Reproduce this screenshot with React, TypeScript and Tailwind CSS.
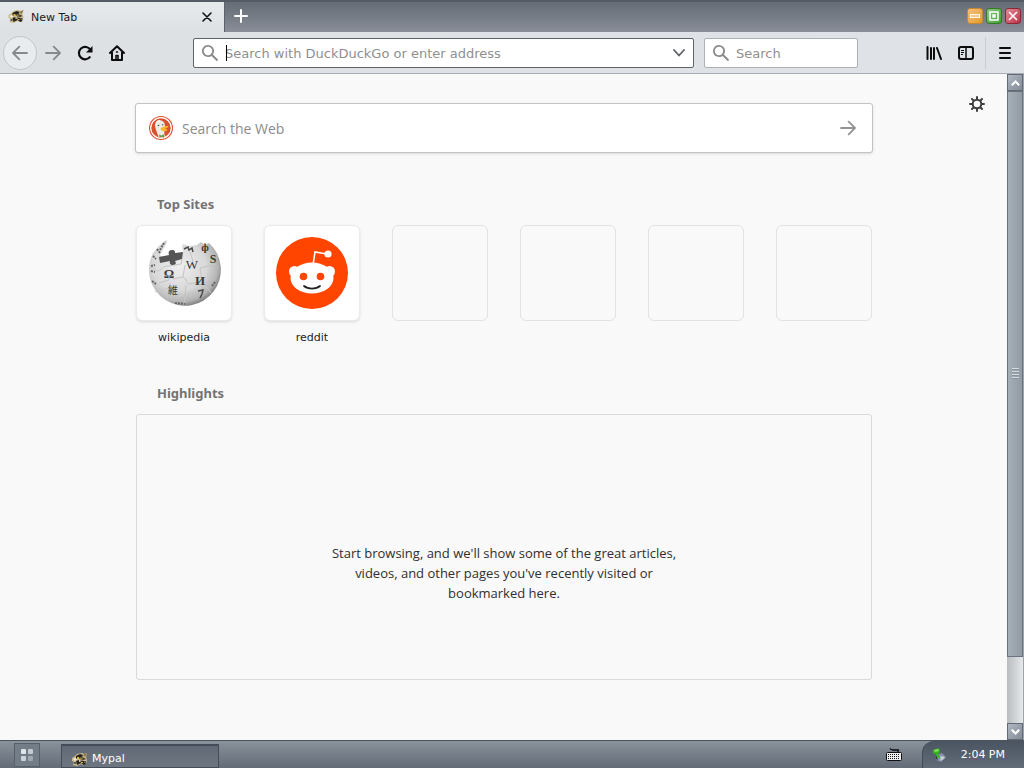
import type { ReactNode } from "react";

const emptySites = [1, 2, 3, 4];
const gripLines = [1, 2, 3, 4];
const startSquares = ["bg-[#dfe4e8]", "bg-[#c3cad0]", "bg-[#ccd3d8]", "bg-[#9fa8b0]"];

function SearchIcon({ className }: { className?: string }) {
    return (
        <svg viewBox="0 0 16 16" className={className} fill="currentColor" aria-hidden="true">
            <path d="M15.7 14.3l-4.8-4.8a6 6 0 1 0-1.4 1.4l4.8 4.8a1 1 0 0 0 1.4-1.4zM6 10.2a4.2 4.2 0 1 1 4.2-4.2A4.2 4.2 0 0 1 6 10.200z" />
        </svg>
    );
}

function ArrowIcon({ className }: { className?: string }) {
    return (
        <svg viewBox="0 0 16 16" className={className} fill="none" stroke="currentColor" strokeWidth="1.800" strokeLinecap="round" strokeLinejoin="round" aria-hidden="true">
            <path d="M1 8h14M8.700 1.700L15 8l-6.300 6.300" />
        </svg>
    );
}

function BadgerIcon({ className }: { className?: string }) {
    return (
        <svg viewBox="0 0 16 16" className={className} aria-hidden="true">
            <path d="M0 6l3-2 2-2 5-1 2 1 3-1-1 4 1 3-1 4-3 1-2-1-4 2-4-1 1-3-2-1z" fill="#c9b98c" />
            <path d="M4 4l4-2 3 1-1 2 4 2-3 1-4-2-3 1zM4 9l3-1 5 1 2 3-2 1-3-2-4 2z" fill="#25231d" />
            <path d="M7 6l2-1 3 2-3 1zM11 3l4-2-2 4z" fill="#8a7440" />
            <path d="M5 5h2v2H5zM9 10h2v1H9z" fill="#e0b83e" />
            <path d="M1 7l2-1 2 1-2 2zM7 8l3 1-3 1z" fill="#f4edd8" />
            <path d="M12 9h2v2h-2zM2 10h2v2H2z" fill="#5a5d50" />
        </svg>
    );
}

function DuckIcon() {
    return (
        <svg viewBox="0 0 24 24" className="h-6 w-6 shrink-0" aria-hidden="true">
            <circle cx="12" cy="12" r="12" fill="#d9502f" />
            <circle cx="12" cy="12" r="10.300" fill="none" stroke="#fff" strokeWidth="1.200" />
            <path d="M9.500 21C8.500 17 5.800 12 6 8.500 6.500 5.500 8.500 3.800 11 4.300c3 .3 5 2.200 5 5.700 0 4-1.500 6 0 10.500-2 1.200-4.500 1.300-6.500.5z" fill="#f0ebe2" />
            <path d="M7 6.500c1-2 3-2.500 4.500-2L10 6z" fill="#fff" />
            <path d="M12 12c2-1.300 5.500-2.300 7.300-1.800.9.800-1.700 2-3.500 2.500 1.500.6 3.200.6 2.700 1.400-.8 1.500-6.300 1.400-6.800-.6-.1-.5-.2-1.100.3-1.500z" fill="#fbb52d" />
            <path d="M10 18.500l2.500 1 2.500-1.300v3.300l-2.500-.7-2 .8z" fill="#5f9c4a" />
            <circle cx="9.500" cy="9.500" r=".8" fill="#35536b" />
            <circle cx="13.700" cy="8.800" r=".7" fill="#35536b" />
        </svg>
    );
}

function WikipediaIcon() {
    return (
        <svg viewBox="0 -2 74 74" className="h-[74px] w-[74px]" aria-hidden="true">
            <defs>
                <radialGradient id="globe" cx="42%" cy="40%" r="62%">
                    <stop offset="0" stopColor="#eeeeee" />
                    <stop offset=".6" stopColor="#d8d8d8" />
                    <stop offset=".87" stopColor="#b4b4b4" />
                    <stop offset="1" stopColor="#7d7d7d" />
                </radialGradient>
            </defs>
            <path d="M6 15L12 8l7-6 1 2-3 6-4 7 4 3 13-2 6-4-1-5 1-3 6 2 8-1 4-3 4 3 4-2A36 36 0 1 1 6 15z" fill="url(#globe)" />
            <path d="M12 19l10-2c-1-3 0-5 3-5s3 1 3 3l8-1-1 7-7 2c2 3 0 4-2 4s-4-1-3-4l-10 2z" fill="#555" />
            <path d="M3 30c6-2 5 5 10 2s3-4 9-4l12-2 2-8M12 45l10-3c-1-5 4-5 4-1l10-2 2-12M36 39c5 2 2 7 7 7l12-3-2-13M20 60l3-15M39 47l-2 20M55 43l9 12M43 14l3 9M53 30l16-4M8 54l14-4M37 57l16-4" fill="none" stroke="#c4c4c4" strokeWidth="1" />
            <g fill="#3a3a3a" fontFamily="Liberation Serif, Noto Sans CJK JP, serif" fontSize="13" textAnchor="middle">
                <text x="22" y="40" fontWeight="bold">Ω</text>
                <text x="45" y="31">W</text>
                <text x="53" y="47" fontWeight="bold">И</text>
                <text x="26" y="56" fontSize="10">維</text>
                <text x="66" y="25" fontSize="12" fontWeight="bold">S</text>
                <text x="58" y="13" fontSize="11" fontWeight="bold">ф</text>
            </g>
            <path d="M51 53l5-1-1 4-2 4M37 11l4-2 1 3 3-2 1 4" fill="none" stroke="#4a4a4a" strokeWidth="1.500" />
            <path d="M17 5l-4 7M10 11l3 4M6 18l3 3M4 28l4-1M4 33l4 1M5 43l4 3M28 65l10 1M65 48l3-4" stroke="#666" strokeWidth="2" strokeDasharray="2 1" />
        </svg>
    );
}

function RedditIcon() {
    return (
        <svg viewBox="0 0 72 72" className="h-[72px] w-[72px]" aria-hidden="true">
            <circle cx="36" cy="36" r="36" fill="#ff4500" />
            <path d="M37 28l2-13 12 2" fill="none" stroke="#fff" strokeWidth="1.600" />
            <circle cx="52" cy="17" r="3.600" fill="#fff" />
            <circle cx="18.500" cy="34.500" r="5.500" fill="#fff" />
            <circle cx="53.500" cy="34.500" r="5.500" fill="#fff" />
            <ellipse cx="36" cy="41" rx="21.500" ry="15.500" fill="#fff" />
            <circle cx="27.500" cy="39.500" r="3.800" fill="#ff4500" />
            <circle cx="44.500" cy="39.500" r="3.800" fill="#ff4500" />
            <path d="M28 49c4 3.400 12 3.400 16 0" fill="none" stroke="#222" strokeWidth="1.800" strokeLinecap="round" />
        </svg>
    );
}

function ToolButton({ label, children, className = "w-8" }: { label: string; children: ReactNode; className?: string }) {
    return (
        <button type="button" aria-label={label} className={`flex h-8 shrink-0 items-center justify-center ${className}`}>
            {children}
        </button>
    );
}

function TitleBar() {
    return (
        <header className="flex h-8 shrink-0 items-stretch border-t-2 border-[#535b65] bg-linear-to-b from-[#656c76] to-[#898e98] text-[11px]">
            <div className="flex w-56 items-center bg-linear-to-b from-[#e6eaec] to-[#dde1e4] pl-2">
                <BadgerIcon className="h-4 w-[17px]" />
                <span className="ml-1.5 flex-1 pt-0.5">New Tab</span>
                <button type="button" aria-label="Close tab" className="mr-[9px] flex h-4 w-4 items-center justify-center">
                    <svg viewBox="0 0 10 10" className="h-2.5 w-2.5" stroke="#111" strokeWidth="1.600" strokeLinecap="round">
                        <path d="M1 1l8 8M9 1L1 9" />
                    </svg>
                </button>
            </div>
            <button type="button" aria-label="New tab" className="flex w-8 items-center justify-center border-l border-[#5c636e] pb-0.5">
                <svg viewBox="0 0 14 14" className="h-3.5 w-3.5" stroke="#fff" strokeWidth="2" strokeLinecap="round">
                    <path d="M7 1v12M1 7h12" />
                </svg>
            </button>
            <div className="ml-auto flex items-center gap-[3px] pr-[3px] pb-0.5">
                <button type="button" aria-label="Minimize" className="flex h-4 w-4 items-center justify-center rounded-[3px] border border-[#c9882c] bg-linear-to-br from-[#f7c07c] to-[#e39a1c]">
                    <span className="h-1 w-2.5 border border-[#fff8e6] bg-[#f4c98a]" />
                </button>
                <button type="button" aria-label="Maximize" className="flex h-4 w-4 items-center justify-center rounded-[3px] border border-[#357a22] bg-linear-to-br from-[#8fc586] to-[#39a32a]">
                    <svg viewBox="0 0 10 10" className="h-2.5 w-2.5" fill="none" stroke="#fff" strokeWidth="1.500">
                        <path d="M1 1h8v8H1zM4 4h2v2H4z" />
                    </svg>
                </button>
                <button type="button" aria-label="Close" className="flex h-4 w-4 items-center justify-center rounded-[3px] border border-[#8f2636] bg-linear-to-br from-[#e08a98] to-[#c02c48]">
                    <svg viewBox="0 0 10 10" className="h-2.5 w-2.5" stroke="#fff" strokeWidth="1.600">
                        <path d="M1 1l8 8M9 1L1 9" />
                    </svg>
                </button>
            </div>
        </header>
    );
}

function Toolbar() {
    return (
        <nav className="flex h-[42px] shrink-0 items-center border-b border-[#a7adb2] bg-linear-to-r from-[#dde1e4] to-[#dfe3e8] text-[#0c0c0d]">
            <button type="button" aria-label="Back" className="ml-[3px] flex h-[34px] w-[34px] shrink-0 items-center justify-center rounded-full border border-[#c3c7ca] bg-[#e9ecee] text-[#85898d]">
                <ArrowIcon className="h-4 w-4 rotate-180" />
            </button>
            <ToolButton label="Forward">
                <ArrowIcon className="h-4 w-4 text-[#85898d]" />
            </ToolButton>
            <ToolButton label="Reload">
                <svg viewBox="0 0 16 16" className="h-4 w-4" fill="none" stroke="currentColor" strokeWidth="2.200">
                    <path d="M13.300 11.500A6.200 6.200 0 1 1 13.500 5" />
                    <path d="M15.500 1v6.500H9z" fill="currentColor" stroke="none" />
                </svg>
            </ToolButton>
            <ToolButton label="Home">
                <svg viewBox="0 0 16 16" className="h-4 w-4" fill="none" stroke="currentColor" strokeWidth="2" strokeLinecap="round" strokeLinejoin="round">
                    <path d="M1 8l7-6.800L15 8M3 7.500V15h10V7.500" />
                    <path d="M7 14.500v-4h2v4M7.500 7h1" strokeWidth="1.600" />
                </svg>
            </ToolButton>
            <label className="relative ml-[60px] flex h-[30px] min-w-0 flex-1 items-center rounded-xs border border-[#5e6368] bg-white pl-2">
                <SearchIcon className="h-4 w-4 shrink-0 text-[#8b8b8b]" />
                <input type="text" aria-label="Address" placeholder="Search with DuckDuckGo or enter address" className="ml-[7px] min-w-0 flex-1 bg-transparent pt-0.5 text-[13px] outline-none placeholder:text-[#8f8f8f]" />
                <span className="absolute top-1.5 left-8 h-4 w-px bg-black" />
                <button type="button" aria-label="Show history" className="mr-2 flex h-4 w-3 items-center justify-center">
                    <svg viewBox="0 0 12 8" className="h-2 w-3" fill="none" stroke="#5c6064" strokeWidth="1.800" strokeLinecap="round" strokeLinejoin="round">
                        <path d="M1 1l5 5.500L11 1" />
                    </svg>
                </button>
            </label>
            <label className="mr-[60px] ml-2.5 flex h-[30px] w-[154px] shrink-0 items-center rounded-xs border border-[#abb0b5] bg-white pl-2">
                <SearchIcon className="h-4 w-4 shrink-0 text-[#8b8b8b]" />
                <input type="search" aria-label="Search" placeholder="Search" className="ml-[7px] min-w-0 flex-1 bg-transparent pt-0.5 text-[13px] outline-none placeholder:text-[#8f8f8f]" />
            </label>
            <ToolButton label="Library">
                <svg viewBox="0 0 16 16" className="h-4 w-4" stroke="currentColor" strokeWidth="2" strokeLinecap="round">
                    <path d="M1.500 2v12M5 3v11M8 3v11M11 3l4 11" />
                </svg>
            </ToolButton>
            <ToolButton label="Sidebars">
                <svg viewBox="0 0 16 16" className="h-4 w-4" fill="none" stroke="currentColor" strokeWidth="2">
                    <rect x="1" y="2" width="14" height="12" rx="2" />
                    <path d="M8 2v12" strokeWidth="1.500" />
                    <path d="M3 5.500h3M3 7.500h3M3 9.500h2" strokeWidth="1" />
                </svg>
            </ToolButton>
            <span className="ml-[3px] h-8 w-px bg-[#c8cdd1]" />
            <ToolButton label="Menu" className="w-[38px]">
                <svg viewBox="0 0 14 14" className="h-3.5 w-3.5" stroke="currentColor" strokeWidth="2" strokeLinecap="round">
                    <path d="M2 2h10M2 7h10M2 12h10" />
                </svg>
            </ToolButton>
        </nav>
    );
}

function Scrollbar() {
    const arrow = "flex h-[17px] shrink-0 items-center justify-center border border-[#626a76] bg-linear-to-br from-[#b0b8c2] to-[#838b97]";
    return (
        <div className="flex w-[17px] shrink-0 flex-col border-r border-[#9ba3ab] bg-linear-to-r from-[#b9bdc1] to-[#e6e8ea]">
            <button type="button" aria-label="Scroll up" className={arrow}>
                <svg viewBox="0 0 9 6" className="h-1.5 w-[9px]" fill="none" stroke="#fff" strokeWidth="2">
                    <path d="M.8 5.200l3.700-3.700 3.700 3.700" />
                </svg>
            </button>
            <div className="flex flex-[17] flex-col items-center justify-center gap-px border border-[#69727d] bg-linear-to-r from-[#a5afb6] to-[#929ba5]">
                {gripLines.map((n) => (
                    <span key={n} className="h-0.5 w-[7px] border-t border-[#d5dade] bg-[#8a949d]" />
                ))}
            </div>
            <div className="flex-[2]" />
            <button type="button" aria-label="Scroll down" className={arrow}>
                <svg viewBox="0 0 9 6" className="h-1.5 w-[9px]" fill="none" stroke="#fff" strokeWidth="2">
                    <path d="M.8 .8l3.700 3.700L8.200 .8" />
                </svg>
            </button>
        </div>
    );
}

function NewTabPage() {
    return (
        <main className="relative flex-1 overflow-hidden bg-[#f9f9f9] pt-[29px] pr-8 pl-[33px]">
            <button type="button" aria-label="Settings" className="absolute top-[22px] right-[22px] text-[#3f3f41]">
                <svg viewBox="0 0 16 16" className="h-4 w-4" fill="none" stroke="currentColor" strokeWidth="2" strokeLinecap="round">
                    <circle cx="8" cy="8" r="4.300" />
                    <path d="M8 1v2M8 13v2M1 8h2M13 8h2M3 3l1.500 1.500M11.500 11.500L13 13M13 3l-1.500 1.500M4.500 11.500L3 13" />
                </svg>
            </button>
            <div className="mx-auto max-w-[736px]">
                <form className="-mx-px flex h-[50px] items-center rounded-[3px] border border-[#c3c3c4] bg-white px-[13px] shadow-sm">
                    <DuckIcon />
                    <input type="text" aria-label="Search the Web" placeholder="Search the Web" className="ml-[9px] min-w-0 flex-1 bg-transparent font-['Open_Sans',sans-serif] text-[14px] outline-none placeholder:text-[#8c8c8e]" />
                    <button type="button" aria-label="Submit" className="mr-[3px] text-[#949496]">
                        <ArrowIcon className="h-4 w-4" />
                    </button>
                </form>

                <section className="mt-[41px]">
                    <h2 className="pl-[21px] font-['Noto_Sans',sans-serif] text-[13px] leading-5 font-bold text-[#737375]">Top Sites</h2>
                    <ul className="mt-[11px] grid grid-cols-6 gap-8 text-center text-[11px] leading-4 text-[#1c1c1d]">
                        <li>
                            <a href="#wikipedia">
                                <span className="flex h-24 items-center justify-center rounded-md border border-[#ececed] bg-white shadow-sm">
                                    <WikipediaIcon />
                                </span>
                                <span className="mt-[9px] block">wikipedia</span>
                            </a>
                        </li>
                        <li>
                            <a href="#reddit">
                                <span className="flex h-24 items-center justify-center rounded-md border border-[#ececed] bg-white shadow-sm">
                                    <RedditIcon />
                                </span>
                                <span className="mt-[9px] block">reddit</span>
                            </a>
                        </li>
                        {emptySites.map((n) => (
                            <li key={n} className="h-24 rounded-md border border-[#e2e2e3]" />
                        ))}
                    </ul>
                </section>

                <section className="mt-[37px] text-[13px] leading-5">
                    <h2 className="pl-[21px] font-['Noto_Sans',sans-serif] font-bold text-[#737375]">Highlights</h2>
                    <div className="mt-[11px] rounded-[3px] border border-[#d9d9da] pt-32 pb-[76px]">
                        <p className="mx-auto max-w-[360px] text-center font-['Open_Sans',sans-serif] text-[#2f2f30]">
                            Start browsing, and we'll show some of the great articles, videos, and other pages you've recently visited or bookmarked here.
                        </p>
                    </div>
                </section>
            </div>
        </main>
    );
}

function Taskbar() {
    return (
        <footer className="flex h-7 shrink-0 items-stretch border-t border-[#4c555f] bg-linear-to-b from-[#8a939b] to-[#626b77] text-[11px] text-white">
            <button type="button" aria-label="Start" className="mt-0.5 ml-3.5 grid h-6 w-[26px] grid-cols-2 place-content-center gap-0.5 border border-[#56606a] bg-[#737d88] px-1.5">
                {startSquares.map((color) => (
                    <span key={color} className={`h-[5px] rounded-[1px] ${color}`} />
                ))}
            </button>
            <button type="button" className="mt-[3px] ml-[21px] flex w-[158px] items-center gap-1 border border-t-2 border-[#434d58] bg-linear-to-b from-[#606975] to-[#6d7681] pt-1.5 pl-2.5">
                <BadgerIcon className="h-4 w-4" />
                Mypal
            </button>
            <div className="mr-5 ml-auto flex items-center">
                <svg viewBox="0 0 16 13" className="h-[13px] w-4" aria-hidden="true">
                    <path d="M4 0l1 2 1-1 1 2 1-2 1 2 1-2 1 2 1-2 1 2-2 1" fill="none" stroke="#111" />
                    <rect x=".5" y="4.500" width="15" height="8" rx="1" fill="#eee" stroke="#111" />
                    <path d="M2 6.500h12M2 8.500h12M2 10.500h12" stroke="#111" strokeDasharray="1 1" />
                </svg>
            </div>
            <div className="flex items-center rounded-tl-xl border-l border-[#414b56] bg-linear-to-b from-[#4b5561] to-[#626c78] pr-[19px] pl-2">
                <svg viewBox="0 0 16 16" className="h-4 w-4" aria-hidden="true">
                    <path d="M5 8l6-2 4 4-5 5-5-2z" fill="#8790aa" />
                    <path d="M8 10l4-1 2 2-4 3z" fill="#c3cad8" />
                    <path d="M2 3l6-2 1 4-2 2 3 5-4-2-2-4-2 1z" fill="#35b51c" />
                    <path d="M3 3l4-1 1 2-4 1z" fill="#7fe35d" />
                    <path d="M5 8l2 5-2-1z" fill="#203b2a" />
                </svg>
                <time className="ml-3.5 pt-0.5">2:04 PM</time>
            </div>
        </footer>
    );
}

export default function App() {
    return (
        <div className="flex h-screen flex-col bg-[#dfe3e6] font-['DejaVu_Sans',sans-serif] text-[#18191a]">
            <TitleBar />
            <Toolbar />
            <div className="flex min-h-0 flex-1">
                <NewTabPage />
                <Scrollbar />
            </div>
            <Taskbar />
        </div>
    );
}
